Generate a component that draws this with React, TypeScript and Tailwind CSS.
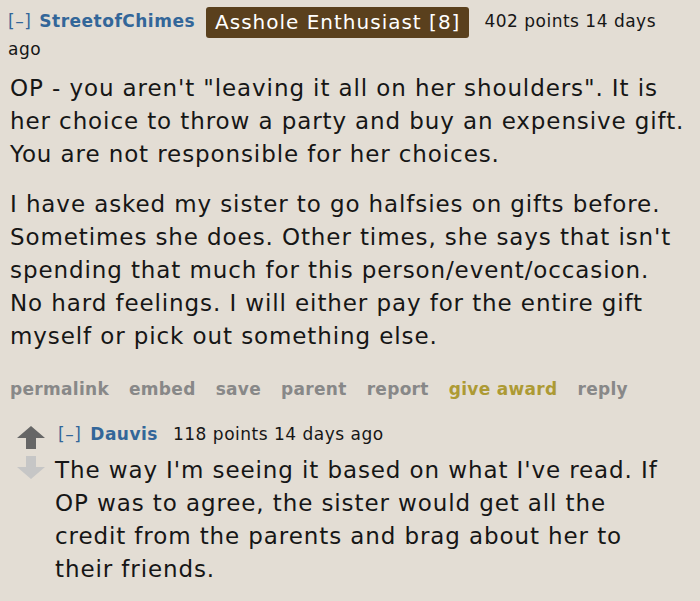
import React from "react";

// ─── Vote arrows ─────────────────────────────────────────────────────────────
const Arrow = ({ up, color }: { up?: boolean; color: string }) => (
  <svg width="30" height="25" viewBox="0 0 30 25" className={up ? "" : "rotate-180"}>
    <path d="M15 1 L29 13 L20 13 L20 24 L10 24 L10 13 L1 13 Z" fill={color} />
  </svg>
);

const parentBody = [
  [
    `OP - you aren't "leaving it all on her shoulders". It is`,
    "her choice to throw a party and buy an expensive gift.",
    "You are not responsible for her choices.",
  ],
  [
    "I have asked my sister to go halfsies on gifts before.",
    "Sometimes she does. Other times, she says that isn't",
    "spending that much for this person/event/occasion.",
    "No hard feelings. I will either pay for the entire gift",
    "myself or pick out something else.",
  ],
];

const childBody = [
  "The way I'm seeing it based on what I've read. If",
  "OP was to agree, the sister would get all the",
  "credit from the parents and brag about her to",
  "their friends.",
];

const buttons = ["permalink", "embed", "save", "parent", "report", "give award", "reply"];

export default function App() {
  return (
    <div className="w-[700px] h-[601px] overflow-hidden bg-[#e3ddd4] text-[#161616] font-['DejaVu_Sans',Verdana,sans-serif]">
      {/* ── Parent tagline ── */}
      <div className="flex items-center h-[32px] mt-[6px] pl-[8px] text-[17px] tracking-[0.5px] whitespace-nowrap">
        <span className="text-[#369]">[–]</span>
        <span className="ml-[8px] font-bold text-[#369]">StreetofChimes</span>
        <span className="ml-[11px] h-[31px] px-[9px] rounded-[3px] bg-[#5a401d] text-white text-[20px] tracking-[1px] flex items-center">
          Asshole Enthusiast [8]
        </span>
        <span className="ml-[15px]">402 points 14 days</span>
      </div>
      <div className="pl-[8px] text-[17px] tracking-[0.5px] leading-[22px]">ago</div>

      {/* ── Parent body ── */}
      <div className="pl-[10px] mt-[12px] text-[23px] tracking-[0.9px] leading-[33px] whitespace-nowrap">
        {parentBody.map((p, i) => (
          <p key={i} className={i ? "mt-[17px]" : ""}>
            {p.map((l) => (
              <span key={l} className="block">{l}</span>
            ))}
          </p>
        ))}
      </div>

      {/* ── Buttons ── */}
      <div className="flex gap-[20px] pl-[10px] mt-[25px] text-[17px] tracking-[0.3px] font-bold text-[#888] leading-[22px]">
        {buttons.map((b) => (
          <span key={b} className={b === "give award" ? "text-[#ad9a34]" : ""}>{b}</span>
        ))}
      </div>

      {/* ── Child comment ── */}
      <div className="flex mt-[20px]">
        <div className="flex flex-col gap-[5px] pl-[16px] pt-[5px] w-[55px]">
          <Arrow up color="#666" />
          <Arrow color="#c6c6c6" />
        </div>
        <div>
          <div className="flex items-center h-[30px] pl-[3px] text-[17px] tracking-[0.5px] whitespace-nowrap">
            <span className="text-[#369]">[–]</span>
            <span className="ml-[9px] font-bold text-[#369]">Dauvis</span>
            <span className="ml-[15px]">118 points 14 days ago</span>
          </div>
          <div className="mt-[4px] text-[23px] tracking-[0.9px] leading-[33px] whitespace-nowrap">
            {childBody.map((l) => (
              <span key={l} className="block">{l}</span>
            ))}
          </div>
        </div>
      </div>
    </div>
  );
}
